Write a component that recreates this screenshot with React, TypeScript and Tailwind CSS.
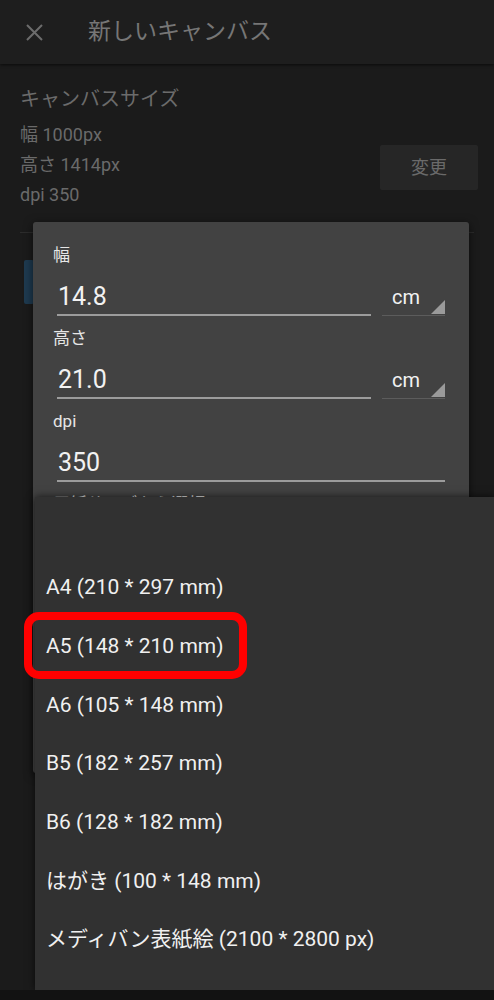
import React from "react";

const items = [
  "",
  "A4 (210 * 297 mm)",
  "A5 (148 * 210 mm)",
  "A6 (105 * 148 mm)",
  "B5 (182 * 257 mm)",
  "B6 (128 * 182 mm)",
  "はがき (100 * 148 mm)",
  "メディバン表紙絵 (2100 * 2800 px)",
];

function Field({ label, value, unit }: { label: string; value: string; unit?: boolean }) {
  return (
    <div className="flex flex-col">
      <div className="h-[24px] leading-[24px] text-[17px] text-[#e6e6e6]">{label}</div>
      <div className="flex items-end">
        <div className={unit ? "ml-[4px] w-[314px]" : "ml-[4px] w-[388px]"}>
          <div className="pt-[15px] h-[45px] leading-[30px] text-[25px] text-[#f2f2f2] pl-[1px]">{value}</div>
          <div className="mt-[2px] h-[2px] bg-[#9c9c9c]" />
        </div>
        {unit && (
          <div className="ml-[11px] w-[63px] relative">
            <div className="pt-[15px] h-[45px] leading-[30px] text-[20px] text-[#f2f2f2] pl-[10px]">cm</div>
            <div className="mt-[2px] h-[2px] flex items-end">
              <div className="h-[1px] w-full bg-[#5c5c5c]" />
            </div>
            <svg className="absolute right-0 bottom-[2px]" width="14" height="14" viewBox="0 0 14 14">
              <polygon points="14,0 14,14 0,14" fill="#9a9a9a" />
            </svg>
          </div>
        )}
      </div>
    </div>
  );
}

export default function App() {
  return (
    <div
      className="relative w-[494px] h-[1000px] overflow-hidden bg-[#1b1b1b]"
      style={{ fontFamily: "Roboto, 'Noto Sans CJK JP', sans-serif" }}
    >
      {/* header */}
      <div className="h-[64px] bg-[#1e1e1e] flex items-center shadow-[0_1px_3px_rgba(0,0,0,0.6)] relative z-0">
        <svg className="ml-[26px]" width="17" height="17" viewBox="0 0 17 17">
          <path d="M1 1 L16 16 M16 1 L1 16" stroke="#6c6c6c" strokeWidth="2" />
        </svg>
        <div className="ml-[45px] text-[23px] text-[#767676] leading-[30px]">新しいキャンバス</div>
      </div>

      {/* content */}
      <div className="px-[20px] pt-[21px]">
        <div className="text-[20px] leading-[28px] text-[#6b6b6b]">キャンバスサイズ</div>
        <div className="flex items-start">
          <div className="flex-1 pt-[7px] text-[18px] leading-[30px] text-[#6a6a6a]">
            <div>幅 1000px</div>
            <div>高さ 1414px</div>
            <div>dpi 350</div>
          </div>
          <div className="mt-[32px] mr-[-4px] w-[98px] h-[45px] rounded-[2px] bg-[#262626] flex items-center justify-center text-[18px] text-[#6a6a6a]">
            変更
          </div>
        </div>
        <div className="mt-[22px] h-[1px] bg-[#2c2c2c]" />
        <div className="mt-[27px] ml-[4px] w-[10px] h-[44px] rounded-[2px] bg-[#1e3a50]" />
      </div>

      {/* dialog */}
      <div className="absolute left-[33px] top-[222px] w-[436px] h-[551px] rounded-[3px] bg-[#424242] shadow-[0_2px_10px_rgba(0,0,0,0.6)] overflow-hidden">
        <div className="pl-[20px] pt-[21px] flex flex-col gap-[10px]">
          <Field label="幅" value="14.8" unit />
          <Field label="高さ" value="21.0" unit />
          <Field label="dpi" value="350" />
          <div className="h-[24px] leading-[24px] text-[17px] text-[#e6e6e6]">用紙サイズから選択</div>
        </div>
      </div>

      {/* popup list */}
      <div className="absolute left-[35px] top-[497px] w-[460px] h-[493px] bg-[#313131] shadow-[0_0_8px_rgba(0,0,0,0.7)] overflow-hidden pt-[3px]">
        {items.map((t, i) => (
          <div key={i} className="h-[58.67px] flex items-center pl-[11px] text-[21px] text-[#f0f0f0] whitespace-nowrap">
            {t}
          </div>
        ))}
      </div>

      {/* highlight */}
      <div className="absolute left-[24px] top-[612px] w-[223px] h-[67px] rounded-[15px] border-[8px] border-[#ff0000]" />

      {/* bottom strip */}
      <div className="absolute left-0 bottom-0 w-full h-[10px] bg-[#121212]" />
    </div>
  );
}
